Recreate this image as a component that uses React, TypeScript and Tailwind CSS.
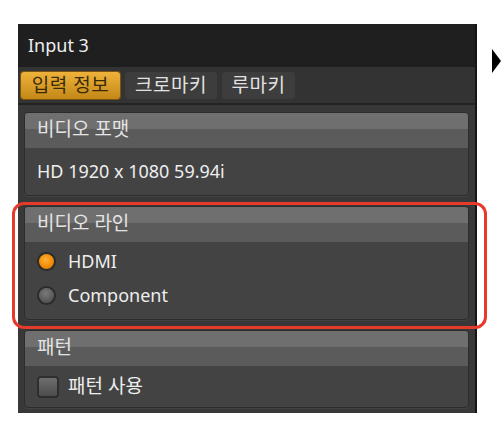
import React from 'react';

const font = { fontFamily: '"Noto Sans", "Noto Sans CJK KR", sans-serif' };

function Section({ title, children }: { title: string; children: React.ReactNode }) {
  return (
    <div className="overflow-hidden rounded-[4px] border border-[#2c2c2c] bg-[#434343] shadow-[0_1px_0_rgba(255,255,255,0.05)]">
      <div className="flex h-[35px] flex-col">
        <div className="h-[16px] bg-[#6f6f6f]" />
        <div className="flex-1 bg-[#5b5b5b]" />
      </div>
      <div className="-mt-[35px] flex h-[35px] items-center px-3 pb-[2px] text-[19px] text-[#e4e4e4]">{title}</div>
      {children}
    </div>
  );
}

export default function App() {
  return (
    <div className="relative h-[438px] w-[502px] bg-white" style={font}>
      <div className="ml-[18px] pt-[24px]">
        <div className="flex h-[389px] w-[459px] flex-col border-r-2 border-[#151515] bg-[#383838]">
          {/* Title bar */}
          <div className="flex h-[43px] items-center bg-[#1f1f1f] px-[10px] text-[18px] text-[#eeeeee]">Input 3</div>

          {/* Tabs */}
          <div className="flex h-[38px] items-center gap-[5px] border-b-2 border-[#232323] bg-[#333333] px-[3px] pt-[1px] text-[19px]">
            <div className="flex h-[27px] w-[99px] items-center justify-center rounded-[3px] bg-gradient-to-b from-[#eeb23a] to-[#c38815] tracking-[0.5px] text-[#3a2a06] shadow-[0_0_0_1px_#7a5410]">
              입력 정보
            </div>
            <div className="flex h-[27px] w-[92px] items-center justify-center rounded-[3px] bg-[#3d3d3d] tracking-[0.5px] text-[#e2e2e2]">
              크로마키
            </div>
            <div className="flex h-[27px] w-[73px] items-center justify-center rounded-[3px] bg-[#3d3d3d] tracking-[0.5px] text-[#e2e2e2]">
              루마키
            </div>
          </div>

          {/* Content */}
          <div className="flex flex-col gap-[10px] px-[6px] pt-[7px]">
            <Section title="비디오 포맷">
              <div className="flex h-[47px] items-center px-3 text-[18px] text-[#eeeeee]">HD 1920 x 1080 59.94i</div>
            </Section>

            <Section title="비디오 라인">
              <div className="flex h-[77px] flex-col justify-center gap-[8px] px-[14px] pb-[4px] text-[18px] text-[#eeeeee]">
                <div className="flex h-[26px] items-center gap-[14px]">
                  <span className="h-[15px] w-[15px] rounded-full bg-[radial-gradient(circle_at_45%_40%,#ffb13a,#f08a00_60%,#a85a00)] shadow-[0_0_0_2px_#2b2b2b]" />
                  HDMI
                </div>
                <div className="flex h-[26px] items-center gap-[14px]">
                  <span className="h-[15px] w-[15px] rounded-full bg-[radial-gradient(circle_at_45%_35%,#7a7a7a,#555555_70%,#3e3e3e)] shadow-[0_0_0_2px_#2b2b2b]" />
                  Component
                </div>
              </div>
            </Section>

            <Section title="패턴">
              <div className="flex h-[41px] items-center gap-[11px] px-[14px] text-[19px] text-[#eeeeee]">
                <span className="h-[18px] w-[18px] rounded-[2px] bg-gradient-to-b from-[#6e6e6e] to-[#4c4c4c] shadow-[0_0_0_2px_#2e2e2e]" />
                패턴 사용
              </div>
            </Section>
          </div>
        </div>
      </div>

      {/* Red highlight annotation */}
      <div className="absolute left-[12px] top-[202px] h-[127px] w-[475px] rounded-[12px] border-[3px] border-[#e63a2b]" />

      {/* Arrow */}
      <svg className="absolute left-[491px] top-[48px]" width="11" height="26" viewBox="0 0 11 26">
        <polygon points="1,1 10,13 1,25" fill="#000" />
      </svg>
    </div>
  );
}
